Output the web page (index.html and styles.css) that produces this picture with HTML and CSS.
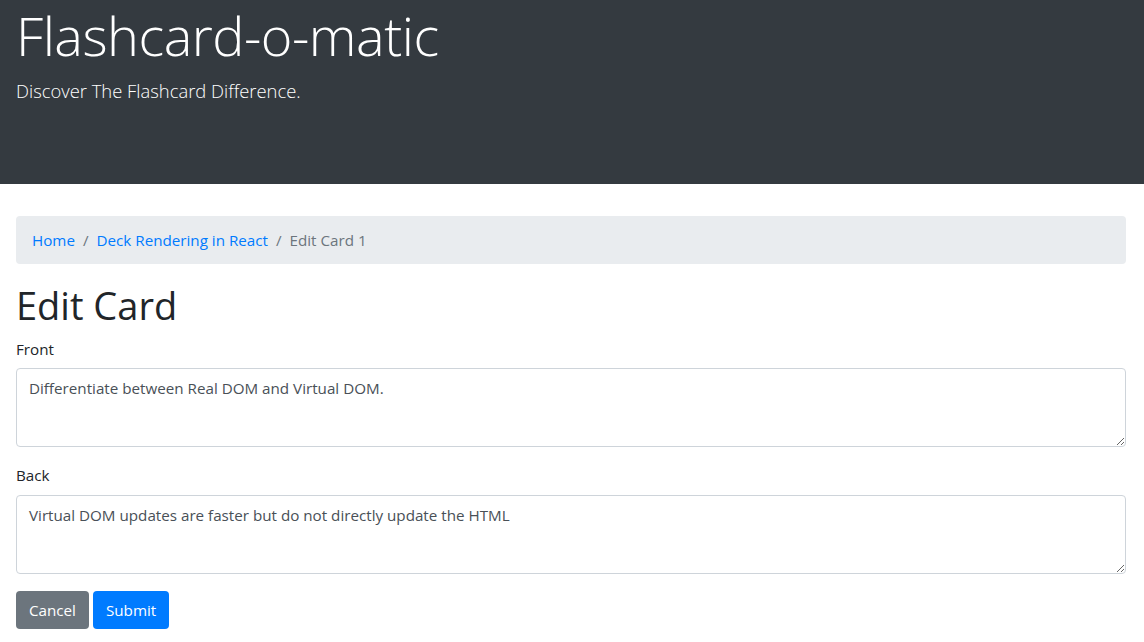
FILE: index.html
```html
<!DOCTYPE html>
<html lang="en">
<head>
<meta charset="utf-8">
<title>Flashcard-o-matic</title>
<link rel="stylesheet" href="styles.css">
</head>
<body>
<header class="jumbotron">
  <div class="container">
    <h1 class="display">Flashcard-o-matic</h1>
    <p class="lead">Discover The Flashcard Difference.</p>
  </div>
</header>
<main class="container">
  <nav class="breadcrumb">
    <a href="#" class="crumb-link">Home</a>
    <span class="sep">/</span>
    <a href="#" class="crumb-link">Deck Rendering in React</a>
    <span class="sep">/</span>
    <span class="crumb-active">Edit Card 1</span>
  </nav>
  <h2 class="page-title">Edit Card</h2>
  <form class="card-form">
    <div class="form-group">
      <label class="form-label" for="front">Front</label>
      <textarea id="front" class="form-control">Differentiate between Real DOM and Virtual DOM.</textarea>
    </div>
    <div class="form-group">
      <label class="form-label" for="back">Back</label>
      <textarea id="back" class="form-control">Virtual DOM updates are faster but do not directly update the HTML</textarea>
    </div>
    <div class="actions">
      <button type="button" class="btn btn-secondary">Cancel</button>
      <button type="submit" class="btn btn-primary">Submit</button>
    </div>
  </form>
</main>
</body>
</html>
```
FILE: styles.css
```css
* { box-sizing: border-box; }
html, body { margin: 0; padding: 0; }
body {
  font-family: "Open Sans", "Noto Sans", sans-serif;
  font-size: 15.2px;
  line-height: 1.5;
  color: #212529;
  background: #fff;
}
.container { padding: 0 18px 0 16px; }
.jumbotron {
  background: #343a40;
  color: #fff;
  height: 184px;
  margin-bottom: 32px;
  padding-top: 3px;
}
.display {
  margin: 0;
  font-size: 54px;
  font-weight: 300;
  line-height: 1.2;
  letter-spacing: -0.5px;
}
.lead {
  margin: 9px 0 0;
  font-size: 18.4px;
  font-weight: 300;
  line-height: 1.5;
}
.breadcrumb {
  display: flex;
  align-items: center;
  background: #e9ecef;
  border-radius: 4px;
  padding: 12px 16px;
  margin-bottom: 19px;
  line-height: 24px;
}
.crumb-link { color: #007bff; text-decoration: none; }
.sep { color: #6c757d; padding: 0 8px; }
.crumb-active { color: #6c757d; }
.page-title {
  margin: 0 0 9px;
  font-size: 38px;
  font-weight: 400;
  line-height: 1.2;
}
.form-group { margin-bottom: 17px; }
.form-label { display: block; margin-bottom: 8px; }
.form-control {
  display: block;
  width: 100%;
  height: 79px;
  padding: 8px 12px 4px;
  font-family: inherit;
  font-size: 15.2px;
  line-height: 1.5;
  color: #495057;
  border: 1px solid #ced4da;
  border-radius: 4px;
  resize: vertical;
}
.actions { display: flex; gap: 4px; }
.btn {
  font-family: inherit;
  font-size: 15.2px;
  line-height: 24px;
  padding: 6px 12px;
  border: 1px solid transparent;
  border-radius: 4px;
  color: #fff;
}
.btn-secondary { background: #6c757d; }
.btn-primary { background: #007bff; }
```
